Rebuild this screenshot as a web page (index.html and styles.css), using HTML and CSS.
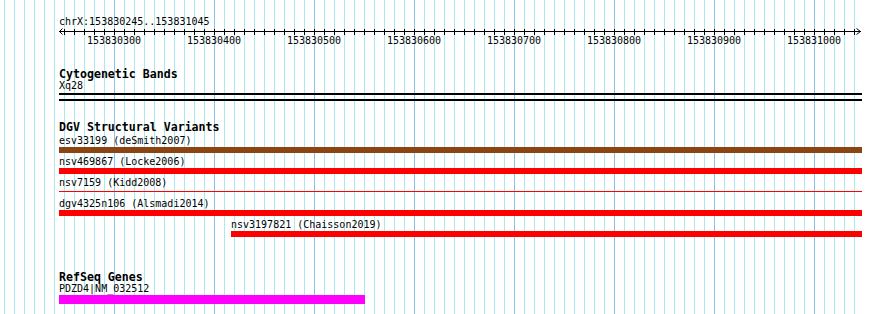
FILE: index.html
```html
<!DOCTYPE html>
<html>
<head>
<meta charset="utf-8">
<title>chrX:153830245..153831045</title>
<link rel="stylesheet" href="styles.css">
</head>
<body>
<div class="view">
  <div class="content">
    <div class="loc">chrX:153830245..153831045</div>
    <svg class="ruler" width="803" height="19" viewBox="0 0 803 19">
      <defs>
        <pattern id="tick" x="5" y="0" width="10" height="19" patternUnits="userSpaceOnUse">
          <rect x="0" y="0" width="1" height="19" fill="#000"/>
        </pattern>
      </defs>
      <rect x="0" y="4" width="802" height="1" fill="#000"/>
      <rect x="5" y="2" width="791" height="6" fill="url(#tick)"/>
      <path class="arrow" d="M3.5 1.5 L0.5 4.5 L3.5 7.5"/>
      <path class="arrow" d="M797.5 1.5 L801.5 4.5 L797.5 7.5"/>
      <text x="55" y="17" text-anchor="middle">153830300</text>
      <text x="155" y="17" text-anchor="middle">153830400</text>
      <text x="255" y="17" text-anchor="middle">153830500</text>
      <text x="355" y="17" text-anchor="middle">153830600</text>
      <text x="455" y="17" text-anchor="middle">153830700</text>
      <text x="555" y="17" text-anchor="middle">153830800</text>
      <text x="655" y="17" text-anchor="middle">153830900</text>
      <text x="755" y="17" text-anchor="middle">153831000</text>
    </svg>

    <section class="track cyto">
      <h2 class="track-title">Cytogenetic Bands</h2>
      <div class="label">Xq28</div>
      <div class="band-line"></div>
      <div class="band-line second"></div>
    </section>

    <section class="track dgv">
      <h2 class="track-title">DGV Structural Variants</h2>
      <div class="feature first">
        <div class="label">esv33199 (deSmith2007)</div>
        <div class="bar brown"></div>
      </div>
      <div class="feature">
        <div class="label">nsv469867 (Locke2006)</div>
        <div class="bar red"></div>
      </div>
      <div class="feature">
        <div class="label">nsv7159 (Kidd2008)</div>
        <div class="bar red thin"></div>
      </div>
      <div class="feature">
        <div class="label">dgv4325n106 (Alsmadi2014)</div>
        <div class="bar red"></div>
      </div>
      <div class="feature" style="margin-left:172px">
        <div class="label">nsv3197821 (Chaisson2019)</div>
        <div class="bar red"></div>
      </div>
    </section>

    <section class="track refseq">
      <h2 class="track-title">RefSeq Genes</h2>
      <div class="label">PDZD4|NM_032512</div>
      <div class="bar magenta" style="width:306px"></div>
    </section>
  </div>
</div>
</body>
</html>
```

FILE: styles.css
```css
html, body {
  margin: 0;
  padding: 0;
  background: #ffffff;
}

.view {
  position: relative;
  width: 890px;
  height: 314px;
  overflow: hidden;
  font-family: "DejaVu Sans Mono", monospace;
  font-size: 10px;
  color: #000;
  background: #ffffff;
}

/* minor grid lines (every 10 bp) */
.view::before {
  content: "";
  position: absolute;
  left: 0;
  top: 0;
  width: 856px;
  height: 100%;
  background-image: linear-gradient(to right, #aaeaee 0 1px, transparent 1px);
  background-size: 10px 100%;
  background-position: 4px 0;
  z-index: 0;
}

/* major grid lines (every 100 bp) */
.view::after {
  content: "";
  position: absolute;
  left: 114px;
  top: 0;
  width: 702px;
  height: 100%;
  background-image: linear-gradient(to right, #87c3eb 0 1px, transparent 1px);
  background-size: 100px 100%;
  background-position: 0 0;
  z-index: 0;
}

.content {
  position: relative;
  z-index: 1;
  padding-left: 59px;
  width: 803px;
}

.loc {
  margin-top: 16px;
  line-height: 11px;
  height: 11px;
  white-space: nowrap;
}

.ruler {
  display: block;
  overflow: visible;
}

.ruler text {
  font-family: "DejaVu Sans Mono", monospace;
  font-size: 10px;
  fill: #000;
}

.ruler .arrow {
  fill: none;
  stroke: #000;
  stroke-width: 1;
}

.track-title {
  margin: 0;
  font-family: "DejaVu Sans Mono", monospace;
  font-weight: bold;
  font-size: 11.6px;
  line-height: 11px;
  height: 11px;
  white-space: nowrap;
}

.label {
  line-height: 11px;
  height: 11px;
  white-space: nowrap;
}

.cyto .track-title {
  margin-top: 23px;
}

.band-line {
  height: 2px;
  background: #000;
  margin-top: 2px;
}

.band-line.second {
  margin-top: 4px;
}

.dgv .track-title {
  margin-top: 21px;
}

.feature.first {
  margin-top: 2px;
}

.bar {
  height: 6px;
  margin-top: 1px;
  margin-bottom: 3px;
}

.bar.brown {
  background: #8b4513;
}

.bar.red {
  background: #ff0000;
}

.bar.thin {
  height: 1px;
  margin-top: 3px;
  margin-bottom: 6px;
}

.refseq .track-title {
  margin-top: 35px;
}

.bar.magenta {
  background: #ff00ff;
  height: 9px;
  margin-top: 1px;
  margin-bottom: 0;
}
```
